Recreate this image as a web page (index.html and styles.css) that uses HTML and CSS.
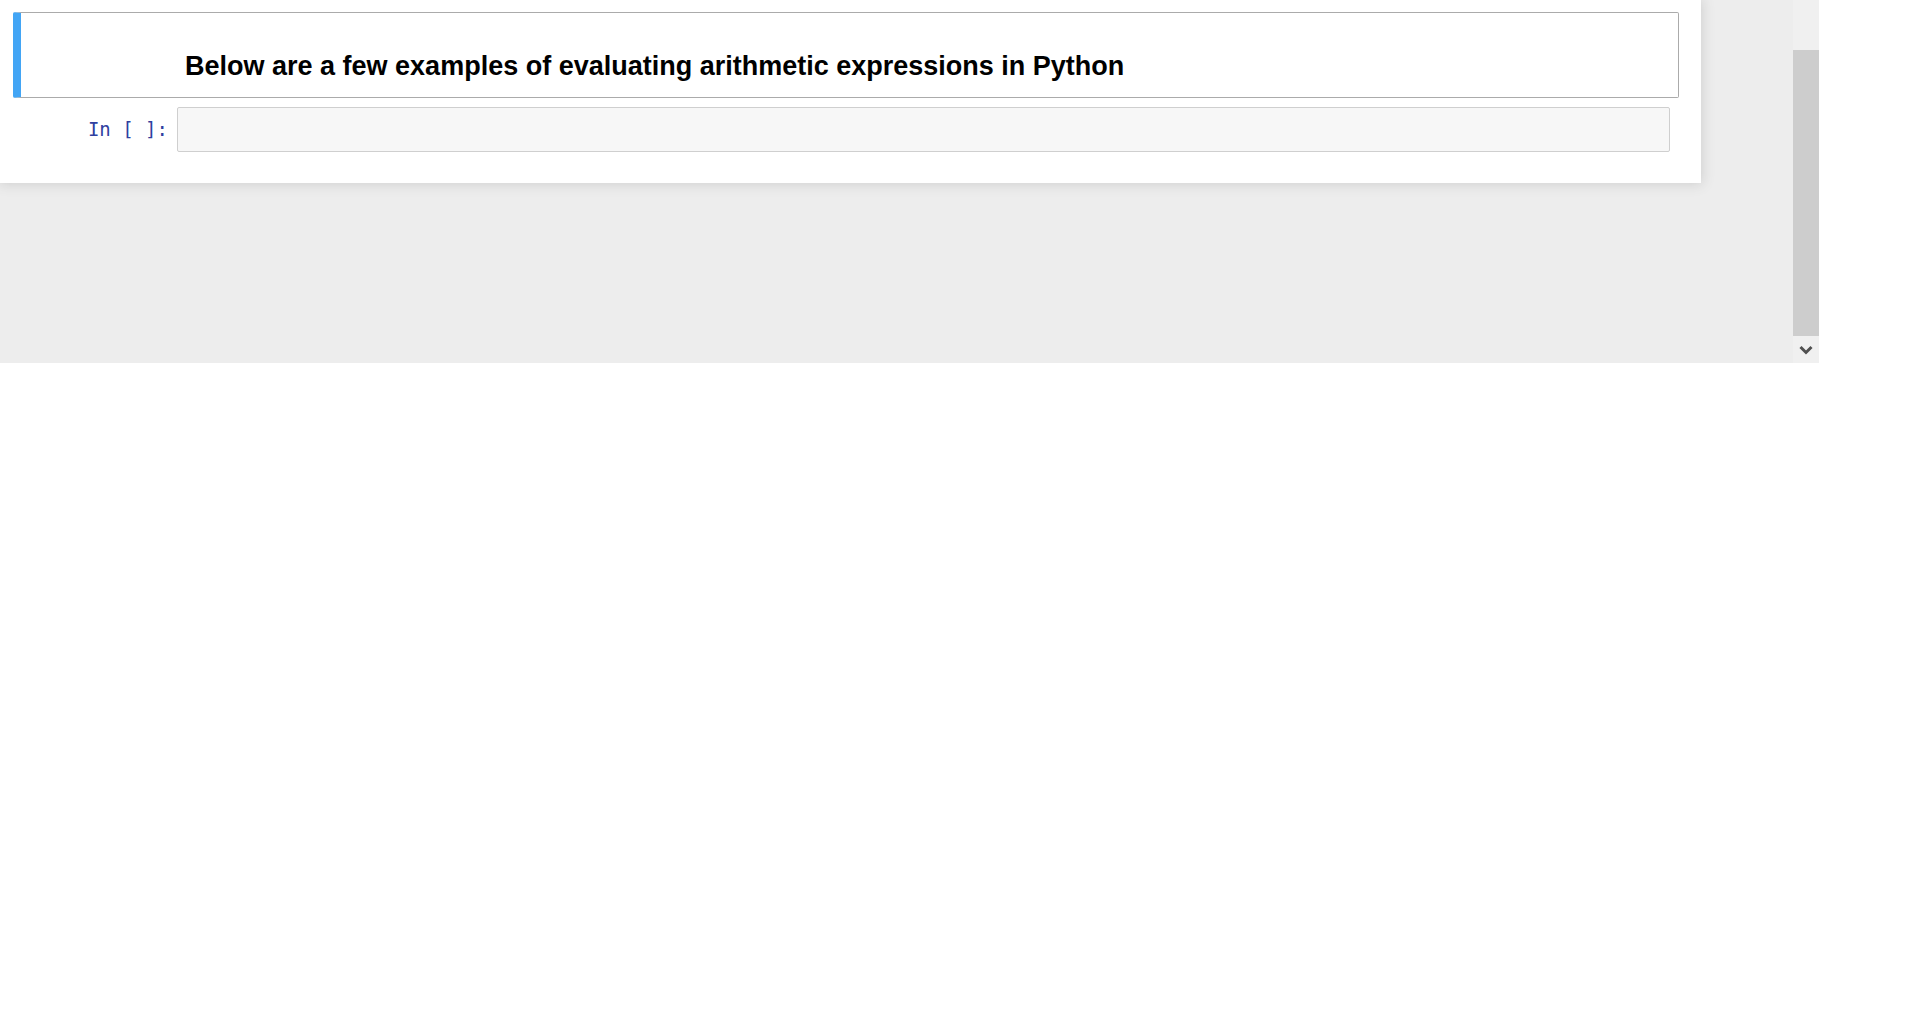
FILE: index.html
```html
<!DOCTYPE html>
<html>
<head>
<meta charset="utf-8">
<link rel="stylesheet" href="styles.css">
</head>
<body>
<div class="frame">
  <div class="viewport">
    <div class="notebook">
      <div class="cell text-cell">
        <h3 class="md-heading">Below are a few examples of evaluating arithmetic expressions in Python</h3>
      </div>
      <div class="cell code-cell">
        <div class="prompt">In&nbsp;[&nbsp;]:</div>
        <div class="input-area"></div>
      </div>
    </div>
  </div>
  <div class="scrollbar">
    <div class="track-top"></div>
    <div class="thumb"></div>
    <div class="scroll-btn">
      <svg width="14" height="10" viewBox="0 0 14 10"><path d="M1.5 2 L7 7.5 L12.5 2" fill="none" stroke="#505050" stroke-width="3"/></svg>
    </div>
  </div>
</div>
</body>
</html>
```

FILE: styles.css
```css
html, body {
  margin: 0;
  padding: 0;
  background: #ffffff;
}
.frame {
  display: flex;
  width: 1819px;
  height: 363px;
}
.viewport {
  flex: 1;
  background: #ededed;
  overflow: hidden;
}
.notebook {
  width: 1701px;
  height: 183px;
  box-sizing: border-box;
  background: #ffffff;
  box-shadow: 0 0 12px 1px rgba(87, 87, 87, 0.2);
  padding: 12px 22px 0 13px;
}
.text-cell {
  border: 1px solid #ababab;
  border-left: 8px solid #42a5f5;
  border-radius: 2px;
  height: 86px;
  box-sizing: border-box;
}
.md-heading {
  margin: 0;
  padding: 38px 0 0 164px;
  font-family: "Liberation Sans", Arial, sans-serif;
  font-weight: bold;
  font-size: 27px;
  line-height: 31px;
  color: #000000;
}
.code-cell {
  display: flex;
  margin-top: 9px;
  padding-right: 9px;
}
.prompt {
  width: 164px;
  box-sizing: border-box;
  padding-right: 9px;
  padding-top: 10px;
  text-align: right;
  font-family: "DejaVu Sans Mono", monospace;
  font-size: 19px;
  line-height: 25px;
  color: #303f9f;
}
.input-area {
  flex: 1;
  height: 45px;
  box-sizing: border-box;
  border: 1px solid #cfcfcf;
  border-radius: 2px;
  background: #f7f7f7;
}
.scrollbar {
  width: 26px;
  display: flex;
  flex-direction: column;
  background: #f0f0f0;
}
.track-top {
  height: 50px;
}
.thumb {
  flex: 1;
  background: #cdcdcd;
}
.scroll-btn {
  height: 27px;
  display: flex;
  align-items: center;
  justify-content: center;
}
```
